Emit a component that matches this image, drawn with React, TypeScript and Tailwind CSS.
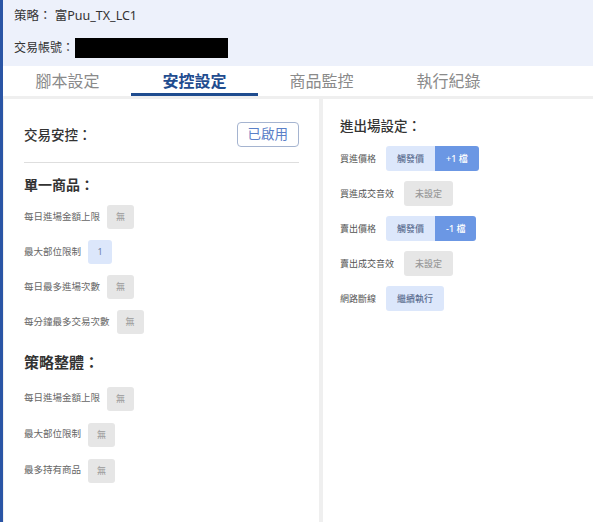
import React from 'react';

type Chip = { text: string; tone: 'gray' | 'light' | 'blue' };

const chipTone: Record<Chip['tone'], string> = {
  gray: 'bg-[#e6e6e6] text-[#9a9a9a]',
  light: 'bg-[#dce7fb] text-[#5d6f92]',
  blue: 'bg-[#6b97e4] text-white',
};

const LimitRow: React.FC<{ label: string; value: string; active?: boolean }> = ({ label, value, active }) => (
  <div className="flex items-center gap-[7px] h-[24px]">
    <span className="text-[9.5px] text-[#666]">{label}</span>
    <span
      className={
        'h-[24px] min-w-[24px] px-[9px] rounded-[3px] flex items-center justify-center text-[9px] ' +
        (active ? 'bg-[#dce7fb] text-[#6b7fa6]' : 'bg-[#e6e6e6] text-[#9a9a9a]')
      }
    >
      {value}
    </span>
  </div>
);

const EntryRow: React.FC<{ label: string; chips: Chip[] }> = ({ label, chips }) => (
  <div className="flex items-center gap-[10px] h-[25px]">
    <span className="text-[9px] text-[#555]">{label}</span>
    <div className="flex h-full rounded-[3px] overflow-hidden">
      {chips.map((c) => (
        <span key={c.text} className={'h-full px-[11px] flex items-center text-[9px] font-medium ' + chipTone[c.tone]}>
          {c.text}
        </span>
      ))}
    </div>
  </div>
);

const tabs = ['腳本設定', '安控設定', '商品監控', '執行紀錄'];

export default function App() {
  return (
    <div className="w-[593px] h-[522px] overflow-hidden flex flex-col border-l-[3px] border-[#2a55a5] bg-[#efefef] font-['Noto_Sans','Noto_Sans_CJK_TC',sans-serif] text-[#333]">
      <div className="bg-[#edf1fb] h-[66px] flex flex-col pl-[11px]">
        <div className="h-[32px] flex items-center text-[12.5px] text-[#333]">策略： 富Puu_TX_LC1</div>
        <div className="h-[32px] flex items-center text-[12px] text-[#333]">
          交易帳號：
          <span className="ml-[1px] w-[153px] h-[20px] bg-black" />
        </div>
      </div>

      <div className="bg-white h-[30px] flex pl-[1px]">
        {tabs.map((t, i) => (
          <div
            key={t}
            className={
              'w-[127px] flex items-center justify-center text-[16px] ' +
              (i === 1 ? 'text-[#1f4c8f] font-semibold border-b-[3px] border-[#1f4c8f] pt-[3px]' : 'text-[#8a8a8a]')
            }
          >
            {t}
          </div>
        ))}
      </div>

      <div className="flex-1 flex gap-[4px] pt-[3px] pl-[1px]">
        <div className="w-[315px] bg-white px-[20px] pt-[23px]">
          <div className="flex items-center justify-between">
            <span className="text-[13.5px] font-medium text-[#333] pt-[2px]">交易安控：</span>
            <span className="h-[25px] px-[10px] flex items-center border border-[#a5b4d0] rounded-[4px] text-[13.5px] text-[#5b80c8]">
              已啟用
            </span>
          </div>
          <div className="mt-[15px] border-t border-[#dedede]" />
          <div className="mt-[11px] text-[14px] font-semibold text-[#333]">單一商品：</div>
          <div className="mt-[10px] flex flex-col gap-[11px]">
            <LimitRow label="每日進場金額上限" value="無" />
            <LimitRow label="最大部位限制" value="1" active />
            <LimitRow label="每日最多進場次數" value="無" />
            <LimitRow label="每分鐘最多交易次數" value="無" />
          </div>
          <div className="mt-[17px] text-[15px] font-semibold text-[#333]">策略整體：</div>
          <div className="mt-[13px] flex flex-col gap-[12px]">
            <LimitRow label="每日進場金額上限" value="無" />
            <LimitRow label="最大部位限制" value="無" />
            <LimitRow label="最多持有商品" value="無" />
          </div>
        </div>

        <div className="flex-1 bg-white pl-[17px] pt-[17px]">
          <div className="text-[13.5px] font-medium text-[#333]">進出場設定：</div>
          <div className="mt-[10px] flex flex-col gap-[10px]">
            <EntryRow label="買進價格" chips={[{ text: '觸發價', tone: 'light' }, { text: '+1 檔', tone: 'blue' }]} />
            <EntryRow label="買進成交音效" chips={[{ text: '未設定', tone: 'gray' }]} />
            <EntryRow label="賣出價格" chips={[{ text: '觸發價', tone: 'light' }, { text: '-1 檔', tone: 'blue' }]} />
            <EntryRow label="賣出成交音效" chips={[{ text: '未設定', tone: 'gray' }]} />
            <EntryRow label="網路斷線" chips={[{ text: '繼續執行', tone: 'light' }]} />
          </div>
        </div>
      </div>
    </div>
  );
}
